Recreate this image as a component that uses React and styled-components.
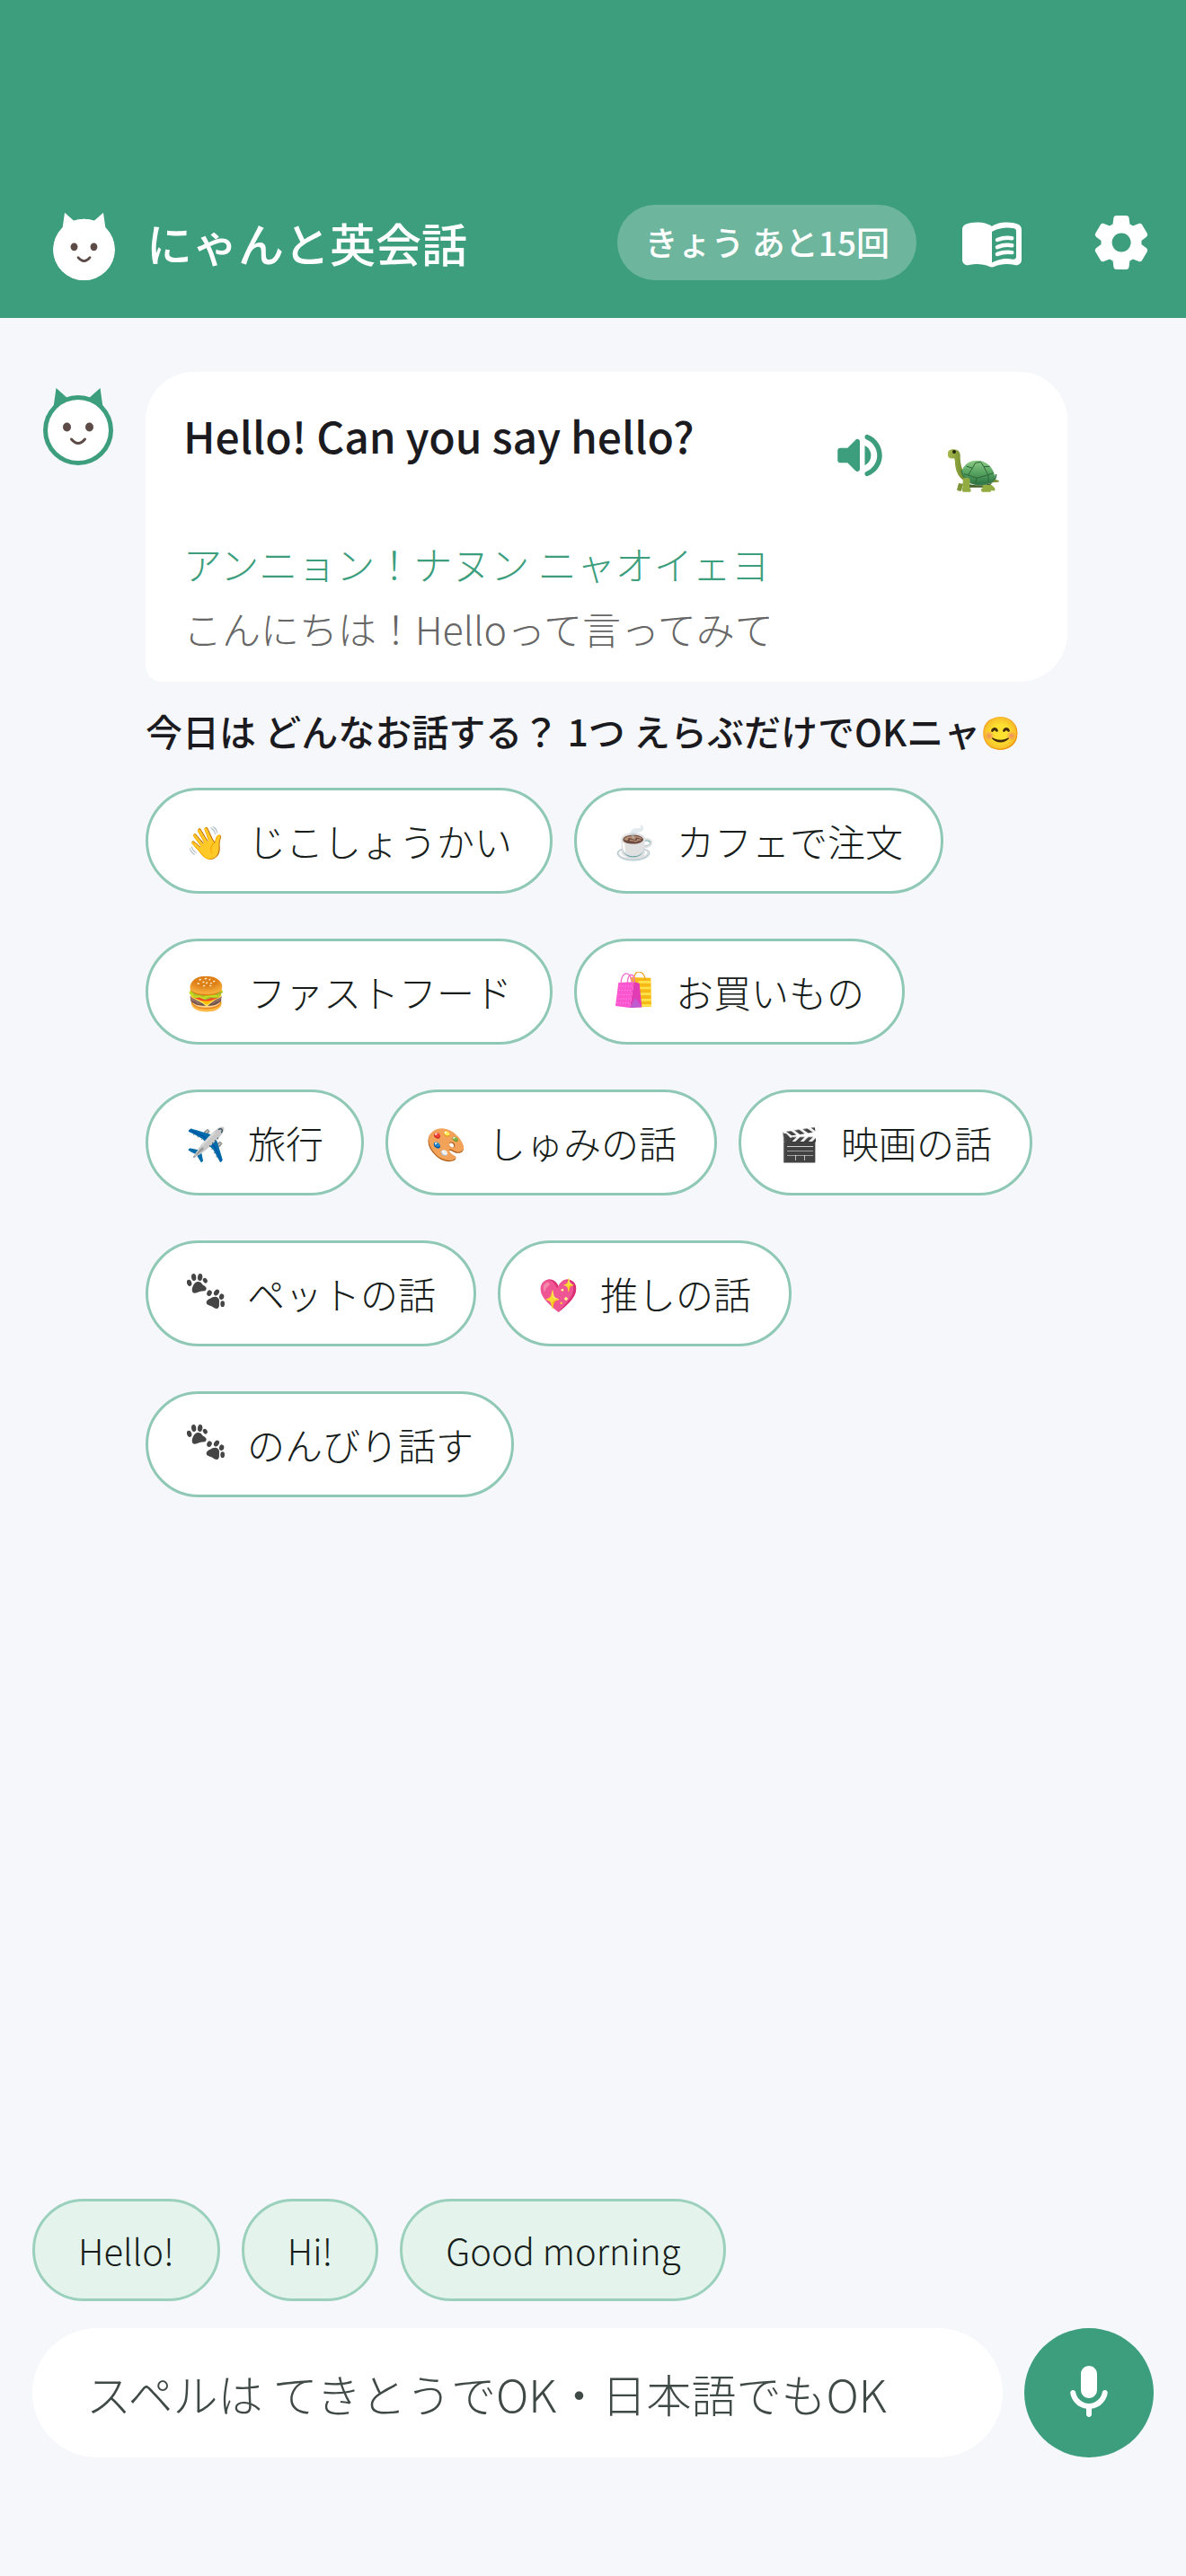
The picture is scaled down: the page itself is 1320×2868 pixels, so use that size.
import React, { useState } from 'react';
import styled, { createGlobalStyle } from 'styled-components';

const GREEN = '#3C9E7C';

const GlobalStyle = createGlobalStyle`
  * {
    box-sizing: border-box;
  }
  body {
    margin: 0;
    background: #F5F7FB;
    color: #1B1B1F;
    font-family: 'Noto Sans CJK JP', 'Noto Sans', sans-serif;
  }
  button, input {
    font-family: inherit;
    color: inherit;
  }
  button {
    padding: 0;
    border: none;
    background: none;
    cursor: pointer;
  }
  h1, p {
    margin: 0;
  }
`;

const Page = styled.div`
  display: flex;
  flex-direction: column;
  min-height: 100vh;
`;

const Header = styled.header`
  display: flex;
  align-items: center;
  height: 354px;
  padding: 186px 0 0 54px;
  background: ${GREEN};
  color: #FFFFFF;
`;

const Logo = styled.div`
  padding-top: 6px;
  line-height: 0;
`;

const Title = styled.h1`
  flex: 1;
  margin-left: 30px;
  font-size: 51px;
  font-weight: 500;
  line-height: 72px;
`;

const Quota = styled.span`
  display: flex;
  align-items: center;
  height: 84px;
  margin-right: 12px;
  padding: 0 30px 2px;
  border-radius: 42px;
  background: rgba(255, 255, 255, 0.25);
  font-size: 37px;
  font-weight: 500;
`;

const IconButton = styled.button`
  display: flex;
  align-items: center;
  justify-content: center;
  width: ${(props) => props.$size}px;
  height: ${(props) => props.$size}px;
  flex-shrink: 0;
  color: ${(props) => props.$color || '#FFFFFF'};
`;

const SlowButton = styled(IconButton)`
  padding-top: 34px;
`;

const Main = styled.main`
  display: flex;
  flex: 1;
  align-items: flex-start;
  gap: 30px;
  padding: 60px 132px 0 42px;
`;

const AvatarWrap = styled.div`
  padding-top: 15px;
  line-height: 0;
`;

const Talk = styled.div`
  flex: 1;
`;

const Card = styled.section`
  padding: 30px 42px;
  border-radius: 54px 54px 54px 18px;
  background: #FFFFFF;
`;

const CardTop = styled.div`
  display: flex;
  margin-bottom: 27px;
`;

const English = styled.p`
  flex: 1;
  padding-top: 4px;
  font-size: 48px;
  font-weight: 500;
  line-height: 72px;
`;

const Reading = styled.p`
  color: ${GREEN};
  font-size: 43px;
  font-weight: 300;
  line-height: 60px;
`;

const Translation = styled(Reading)`
  margin-top: 12px;
  color: #666666;
`;

const Prompt = styled.p`
  margin: 24px 0 34px;
  font-size: 41px;
  font-weight: 500;
  line-height: 60px;
`;

const Topics = styled.div`
  display: flex;
  flex-wrap: wrap;
  gap: 50px 24px;
`;

const Topic = styled.button`
  display: flex;
  align-items: center;
  gap: 24px;
  height: 118px;
  padding: 0 42px 2px;
  border: 3px solid #8FC8B4;
  border-radius: 59px;
  background: #FFFFFF;
  color: #171D1A;
  font-size: 42px;
  font-weight: 300;
`;

const Emoji = styled.span`
  display: inline-flex;
  justify-content: center;
  min-width: 44px;
  font-size: 36px;
  line-height: 1;
`;

const Smile = styled.span`
  font-size: 36px;
  line-height: 1;
  vertical-align: 2px;
`;

const Footer = styled.footer`
  padding: 0 36px 132px;
`;

const Replies = styled.div`
  display: flex;
  gap: 24px;
  margin-bottom: 30px;
`;

const Reply = styled.button`
  height: 114px;
  padding: 0 48px;
  border: 3px solid #9BD0BC;
  border-radius: 57px;
  background: #E4F4EC;
  color: #171D1A;
  font-size: 40px;
  font-weight: 300;
`;

const Composer = styled.form`
  display: flex;
  gap: 24px;
`;

const Field = styled.input`
  flex: 1;
  min-width: 0;
  height: 144px;
  padding: 0 60px;
  border: none;
  border-radius: 72px;
  outline: none;
  background: #FFFFFF;
  font-size: 50px;
  font-weight: 300;
  &::placeholder {
    color: #3F4945;
    opacity: 1;
  }
`;

const MicButton = styled(IconButton)`
  border-radius: 50%;
  background: ${GREEN};
`;

const ICONS = {
  speaker:
    'M3 10v4c0 .55.45 1 1 1h3l3.29 3.29c.63.63 1.71.18 1.71-.71V6.41c0-.89-1.08-1.34-1.71-.71L7 9H4c-.55 0-1 .45-1 1zm13.5 2A4.5 4.5 0 0 0 14 7.97v8.05c1.48-.73 2.5-2.25 2.5-4.02zM14 4.45v.2c0 .38.25.71.6.85C17.18 6.53 19 9.06 19 12s-1.82 5.47-4.4 6.5c-.36.14-.6.47-.6.85v.2c0 .63.63 1.07 1.21.85C18.6 19.11 21 15.84 21 12s-2.4-7.11-5.79-8.4c-.58-.23-1.21.22-1.21.85z',
  gear:
    'M19.5 12c0-.23-.01-.45-.03-.68l1.86-1.41c.4-.3.51-.86.26-1.3l-1.87-3.23c-.25-.44-.79-.62-1.25-.42l-2.15.91c-.37-.26-.76-.49-1.17-.68l-.29-2.31c-.06-.5-.49-.88-.99-.88h-3.73c-.51 0-.94.38-1 .88l-.29 2.31c-.41.19-.8.42-1.17.68l-2.15-.91c-.46-.2-1-.02-1.25.42L2.41 8.62c-.25.44-.14.99.26 1.3l1.86 1.41c-.02.22-.03.44-.03.67s.01.45.03.68l-1.86 1.41c-.4.3-.51.86-.26 1.3l1.87 3.23c.25.44.79.62 1.25.42l2.15-.91c.37.26.76.49 1.17.68l.29 2.31c.06.5.49.88.99.88h3.73c.5 0 .93-.38.99-.88l.29-2.31c.41-.19.8-.42 1.17-.68l2.15.91c.46.2 1 .02 1.25-.42l1.87-3.23c.25-.44.14-.99-.26-1.3l-1.86-1.41c.03-.23.04-.45.04-.68zm-7.46 3.5c-1.93 0-3.5-1.57-3.5-3.5s1.57-3.5 3.5-3.5 3.5 1.57 3.5 3.5-1.57 3.5-3.5 3.5z',
  mic:
    'M12 14c1.66 0 3-1.34 3-3V5c0-1.66-1.34-3-3-3S9 3.34 9 5v6c0 1.66 1.34 3 3 3zm5.91-3c-.49 0-.9.36-.98.85C16.52 14.2 14.47 16 12 16s-4.52-1.8-4.93-4.15c-.08-.49-.49-.85-.98-.85-.61 0-1.09.54-1 1.14.49 3 2.89 5.35 5.91 5.78V20c0 .55.45 1 1 1s1-.45 1-1v-2.08c3.02-.43 5.42-2.78 5.91-5.78.1-.6-.39-1.14-1-1.14z',
};

function Icon({ name, size = 72 }) {
  return (
    <svg width={size} height={size} viewBox="0 0 24 24" fill="currentColor" aria-hidden="true">
      <path d={ICONS[name]} />
    </svg>
  );
}

function BookIcon() {
  return (
    <svg width="72" height="72" viewBox="0 0 24 24" fill="currentColor" aria-hidden="true">
      <path
        fillRule="evenodd"
        d="M17.5 4.5c-1.95 0-4.05.4-5.5 1.5-1.45-1.1-3.55-1.5-5.5-1.5-1.45 0-2.99.22-4.28.79C1.49 5.62 1 6.33 1 7.14v11.28c0 1.3 1.22 2.26 2.48 1.94.98-.25 2.02-.36 3.02-.36 1.56 0 3.22.26 4.56.92.6.3 1.28.3 1.87 0 1.34-.67 3-.92 4.56-.92 1 0 2.04.11 3.02.36 1.26.33 2.48-.63 2.48-1.94V7.14c0-.81-.49-1.52-1.22-1.85-1.28-.57-2.82-.79-4.27-.79zM21 17.23c0 .63-.58 1.09-1.2.98-.75-.14-1.53-.2-2.3-.2-1.7 0-4.15.65-5.5 1.5V8c1.35-.85 3.8-1.5 5.5-1.5.92 0 1.83.09 2.7.28.46.1.8.51.8.98v9.47z"
      />
      <path
        d="M14 11c1.8-.7 3.7-.9 5.4-.6M14 13.7c1.8-.7 3.7-.9 5.4-.6M14 16.3c1.8-.7 3.7-.9 5.4-.6"
        fill="none"
        stroke="currentColor"
        strokeWidth="1.5"
        strokeLinecap="round"
      />
    </svg>
  );
}

function Cat({ size, color, ring = 0 }) {
  return (
    <svg width={size} height={size} viewBox="-2 0 90 90" aria-hidden="true">
      <path d="M15 28 18.5 3 33 16ZM71 28 67.5 3 53 16Z" fill={color} />
      <circle cx="43" cy="50" r="39" fill={color} />
      <circle cx="43" cy="50" r={39 - ring} fill="#FFFFFF" />
      <ellipse cx="30.5" cy="46.5" rx="4.5" ry="5" fill="#5D4B48" />
      <ellipse cx="55.5" cy="46.5" rx="4.5" ry="5" fill="#5D4B48" />
      <path d="M35.5 60Q43 69 50.5 60" fill="none" stroke="#5D4B48" strokeWidth="3" strokeLinecap="round" />
    </svg>
  );
}

function Turtle() {
  return (
    <svg width="72" height="64" viewBox="0 0 216 192" aria-hidden="true">
      <defs>
        <linearGradient id="shell" x1="0" y1="0" x2="0" y2="1">
          <stop offset="0" stopColor="#8CCB86" />
          <stop offset="0.5" stopColor="#58A562" />
          <stop offset="1" stopColor="#2C7343" />
        </linearGradient>
        <linearGradient id="skin" x1="0" y1="0" x2="1" y2="0">
          <stop offset="0" stopColor="#A5B84C" />
          <stop offset="1" stopColor="#6F8A2B" />
        </linearGradient>
      </defs>
      <path d="M60 138 54 160q6 6 14 4l8-24ZM176 122l18 8q4 4-4 4l-18 2Z" fill="#7C9434" />
      <path d="M24 36C24 26 40 22 52 26c12 4 14 14 13 26 0 20 5 38 13 52l2 26c-18-8-28-28-31-48-2-14 0-22-5-28-8 4-20 0-20-8Z" fill="url(#skin)" />
      <path d="M76 132c20 16 70 18 98 2l-16 18H90Z" fill="#44602A" />
      <path d="M70 98C78 74 96 62 122 62c32 0 56 24 60 60-8 14-30 22-56 20-28-2-50-20-56-44Z" fill="url(#shell)" />
      <path
        d="M86 81l20 7 10-18 18-3 10 16 20-1M106 88l-14 23M144 83l14 27 18-6M92 111l28 10 38-11M120 121l-4 18M158 110l2 24M92 111l-14-4"
        fill="none"
        stroke="#2F6438"
        strokeWidth="3"
      />
      <path d="M69 94c6 28 26 46 54 48 28 2 50-6 60-22l2-12" fill="none" stroke="#397B4B" strokeWidth="5" />
      <path d="M74 126c0-8 22-10 24 2l-2 24q8 8 3 15H74q-6-8 0-16ZM140 144h30q16 12 10 19-7 1-10-2l-4 6h-28q-8-8 2-13Z" fill="#92AC42" />
      <circle cx="45" cy="33" r="6" fill="#20230F" />
    </svg>
  );
}

function Bags() {
  return (
    <svg width="42" height="42" viewBox="18 18 126 126" aria-hidden="true">
      <path d="M66 36 136 38 138 134 98 136Z" fill="#F7B916" />
      <path d="M94 52h42M96 72h41M98 92h39M98 112h40M99 130h39" stroke="#FFE34D" strokeWidth="8" />
      <path d="M80 40c0-30 34-30 38 8" fill="none" stroke="#F0A52B" strokeWidth="4" />
      <path d="M28 54 80 52 66 138 18 132Z" fill="#FB55CF" />
      <path d="M80 52 98 56 106 136 66 138Z" fill="#E23CB4" />
      <path d="M84 104 66 138 106 136Z" fill="#C05AD0" />
      <path d="M32 66h42M30 80h42M28 94h42M26 108h42M24 122h42" stroke="#FF9FE4" strokeWidth="3" strokeDasharray="3 6" />
      <path d="M36 60c0-48 36-48 38-2M58 54c2-34 22-36 24 0" fill="none" stroke="#F36FC9" strokeWidth="4" />
    </svg>
  );
}

function Paws() {
  return (
    <svg width="42" height="42" viewBox="18 18 126 126" fill="#454545" aria-hidden="true">
      <ellipse cx="26" cy="49" rx="8" ry="11" transform="rotate(-15 26 49)" />
      <ellipse cx="41" cy="30" rx="8" ry="12" transform="rotate(-8 41 30)" />
      <ellipse cx="62" cy="30" rx="8" ry="12" transform="rotate(8 62 30)" />
      <ellipse cx="79" cy="41" rx="7" ry="9" transform="rotate(-30 79 41)" />
      <path d="M44 50c8-8 20-6 24 2 4 7 16 8 15 17-2 10-14 6-22 9-8 2-20 10-25 0-3-10 2-20 8-28Z" />
      <ellipse cx="93" cy="83" rx="8" ry="10" transform="rotate(25 93 83)" />
      <ellipse cx="117" cy="81" rx="8" ry="11" transform="rotate(35 117 81)" />
      <ellipse cx="134" cy="95" rx="8" ry="10" transform="rotate(10 134 95)" />
      <ellipse cx="137" cy="119" rx="7" ry="10" />
      <path d="M104 97c10-5 22 0 22 11-1 8 2 18-3 25-7 5-14-1-20-5-8-4-20-4-20-14 1-9 13-12 21-17Z" />
    </svg>
  );
}

const topics = [
  { icon: '👋', label: 'じこしょうかい' },
  { icon: '☕️', label: 'カフェで注文' },
  { icon: '🍔', label: 'ファストフード' },
  { icon: <Bags />, label: 'お買いもの' },
  { icon: '✈️', label: '旅行' },
  { icon: '🎨', label: 'しゅみの話' },
  { icon: '🎬', label: '映画の話' },
  { icon: <Paws />, label: 'ペットの話' },
  { icon: '💖', label: '推しの話' },
  { icon: <Paws />, label: 'のんびり話す' },
];

const replies = ['Hello!', 'Hi!', 'Good morning'];

function App() {
  const [text, setText] = useState('');

  return (
    <Page>
      <GlobalStyle />
      <Header>
        <Logo>
          <Cat size={79} color="#FFFFFF" />
        </Logo>
        <Title>にゃんと英会話</Title>
        <Quota>きょう あと15回</Quota>
        <IconButton type="button" $size={144} aria-label="単語帳">
          <BookIcon />
        </IconButton>
        <IconButton type="button" $size={144} aria-label="設定">
          <Icon name="gear" />
        </IconButton>
      </Header>
      <Main>
        <AvatarWrap>
          <Cat size={90} color={GREEN} ring={5} />
        </AvatarWrap>
        <Talk>
          <Card>
            <CardTop>
              <English>Hello! Can you say hello?</English>
              <IconButton type="button" $size={126} $color={GREEN} aria-label="再生">
                <Icon name="speaker" size={66} />
              </IconButton>
              <SlowButton type="button" $size={126} aria-label="ゆっくり再生">
                <Turtle />
              </SlowButton>
            </CardTop>
            <Reading>アンニョン！ナヌン ニャオイェヨ</Reading>
            <Translation>こんにちは！Helloって言ってみて</Translation>
          </Card>
          <Prompt>
            今日は どんなお話する？ 1つ えらぶだけでOKニャ<Smile>😊</Smile>
          </Prompt>
          <Topics>
            {topics.map((topic) => (
              <Topic key={topic.label} type="button">
                <Emoji>{topic.icon}</Emoji>
                {topic.label}
              </Topic>
            ))}
          </Topics>
        </Talk>
      </Main>
      <Footer>
        <Replies>
          {replies.map((reply) => (
            <Reply key={reply} type="button" onClick={() => setText(reply)}>
              {reply}
            </Reply>
          ))}
        </Replies>
        <Composer onSubmit={(e) => e.preventDefault()}>
          <Field
            type="text"
            aria-label="メッセージ"
            placeholder="スペルは てきとうでOK・日本語でもOK"
            value={text}
            onChange={(e) => setText(e.target.value)}
          />
          <MicButton type="button" $size={144} aria-label="音声入力">
            <Icon name="mic" />
          </MicButton>
        </Composer>
      </Footer>
    </Page>
  );
}

export default App;
